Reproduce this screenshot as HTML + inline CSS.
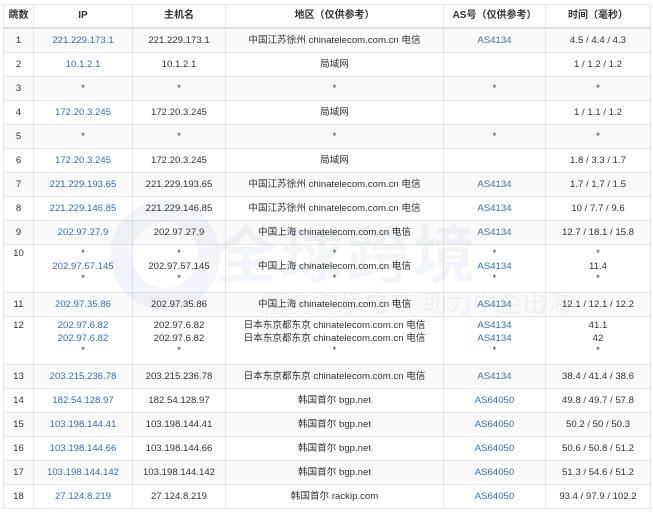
<!DOCTYPE html>
<html><head><meta charset="utf-8"><style>
body{margin:0;background:#fff;width:653px;height:512px;overflow:hidden;position:relative;font-family:"Liberation Sans","Noto Sans CJK SC",sans-serif;}
table{position:absolute;left:3px;top:4px;border-collapse:collapse;table-layout:fixed;width:647px;font-size:9.6px;color:#333;}
td,th{border:1px solid #e6e6e6;text-align:center;padding:0;line-height:12px;}
th{height:22px;font-weight:bold;font-size:10px;color:#333;border-bottom:2px solid #ddd;}
td{height:23px;}
tr.t td{height:44px;vertical-align:top;padding-top:3px;}
tr.t td.l{line-height:12.5px;}
tr.g td{background:#fafafa;}
a{color:#3070b8;text-decoration:none;}
.wm{position:absolute;color:rgba(40,110,200,0.06);white-space:nowrap;pointer-events:none;}
</style></head><body>
<table>
<colgroup><col style="width:30px"><col style="width:99px"><col style="width:93px"><col style="width:218px"><col style="width:102px"><col style="width:105px"></colgroup>
<tr><th>跳数</th><th>IP</th><th>主机名</th><th>地区（仅供参考）</th><th>AS号（仅供参考）</th><th>时间（毫秒）</th></tr>
<tr class="g"><td>1</td><td><a>221.229.173.1</a></td><td>221.229.173.1</td><td>中国江苏徐州 chinatelecom.com.cn 电信</td><td><a>AS4134</a></td><td>4.5 / 4.4 / 4.3</td></tr>
<tr><td>2</td><td><a>10.1.2.1</a></td><td>10.1.2.1</td><td>局域网</td><td></td><td>1 / 1.2 / 1.2</td></tr>
<tr class="g"><td>3</td><td>*</td><td>*</td><td>*</td><td>*</td><td>*</td></tr>
<tr><td>4</td><td><a>172.20.3.245</a></td><td>172.20.3.245</td><td>局域网</td><td></td><td>1 / 1.1 / 1.2</td></tr>
<tr class="g"><td>5</td><td>*</td><td>*</td><td>*</td><td>*</td><td>*</td></tr>
<tr><td>6</td><td><a>172.20.3.245</a></td><td>172.20.3.245</td><td>局域网</td><td></td><td>1.8 / 3.3 / 1.7</td></tr>
<tr class="g"><td>7</td><td><a>221.229.193.65</a></td><td>221.229.193.65</td><td>中国江苏徐州 chinatelecom.com.cn 电信</td><td><a>AS4134</a></td><td>1.7 / 1.7 / 1.5</td></tr>
<tr><td>8</td><td><a>221.229.146.85</a></td><td>221.229.146.85</td><td>中国江苏徐州 chinatelecom.com.cn 电信</td><td><a>AS4134</a></td><td>10 / 7.7 / 9.6</td></tr>
<tr class="g"><td>9</td><td><a>202.97.27.9</a></td><td>202.97.27.9</td><td>中国上海 chinatelecom.com.cn 电信</td><td><a>AS4134</a></td><td>12.7 / 18.1 / 15.8</td></tr>
<tr class="t"><td>10</td><td class="l">*<br><a>202.97.57.145</a><br>*</td><td class="l">*<br>202.97.57.145<br>*</td><td class="l">*<br>中国上海 chinatelecom.com.cn 电信<br>*</td><td class="l">*<br><a>AS4134</a><br>*</td><td class="l">*<br>11.4<br>*</td></tr>
<tr class="g"><td>11</td><td><a>202.97.35.86</a></td><td>202.97.35.86</td><td>中国上海 chinatelecom.com.cn 电信</td><td><a>AS4134</a></td><td>12.1 / 12.1 / 12.2</td></tr>
<tr class="t"><td>12</td><td class="l"><a>202.97.6.82</a><br><a>202.97.6.82</a><br>*</td><td class="l">202.97.6.82<br>202.97.6.82<br>*</td><td class="l">日本东京都东京 chinatelecom.com.cn 电信<br>日本东京都东京 chinatelecom.com.cn 电信<br>*</td><td class="l"><a>AS4134</a><br><a>AS4134</a><br>*</td><td class="l">41.1<br>42<br>*</td></tr>
<tr class="g"><td>13</td><td><a>203.215.236.78</a></td><td>203.215.236.78</td><td>日本东京都东京 chinatelecom.com.cn 电信</td><td><a>AS4134</a></td><td>38.4 / 41.4 / 38.6</td></tr>
<tr><td>14</td><td><a>182.54.128.97</a></td><td>182.54.128.97</td><td>韩国首尔 bgp.net</td><td><a>AS64050</a></td><td>49.8 / 49.7 / 57.8</td></tr>
<tr class="g"><td>15</td><td><a>103.198.144.41</a></td><td>103.198.144.41</td><td>韩国首尔 bgp.net</td><td><a>AS64050</a></td><td>50.2 / 50 / 50.3</td></tr>
<tr><td>16</td><td><a>103.198.144.66</a></td><td>103.198.144.66</td><td>韩国首尔 bgp.net</td><td><a>AS64050</a></td><td>50.6 / 50.8 / 51.2</td></tr>
<tr class="g"><td>17</td><td><a>103.198.144.142</a></td><td>103.198.144.142</td><td>韩国首尔 bgp.net</td><td><a>AS64050</a></td><td>51.3 / 54.6 / 51.2</td></tr>
<tr><td>18</td><td><a>27.124.8.219</a></td><td>27.124.8.219</td><td>韩国首尔 rackip.com</td><td><a>AS64050</a></td><td>93.4 / 97.9 / 102.2</td></tr>
</table>
<div class="wm" style="left:110px;top:200px;width:110px;height:110px;border-radius:50%;border:22px solid rgba(40,110,200,0.06);box-sizing:border-box;"></div>
<div class="wm" style="left:215px;top:205px;font-size:62px;font-weight:bold;letter-spacing:4px;">全球跨境</div>
<div class="wm" style="left:265px;top:284px;font-size:24px;letter-spacing:1px;">服务跨境电商 助力中企出海</div>
</body></html>
